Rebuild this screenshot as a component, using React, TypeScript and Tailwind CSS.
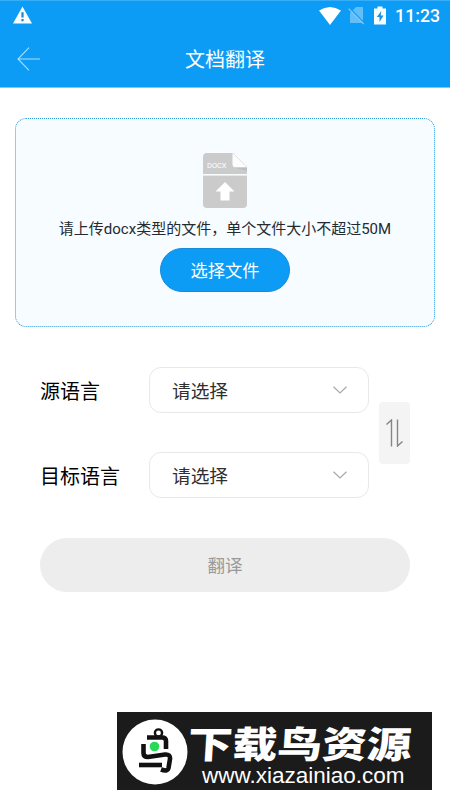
const FONT = "font-[Roboto,'Noto_Sans_CJK_SC',sans-serif]";

function StatusBar() {
  return (
    <div className="flex h-[29px] items-center justify-between pl-[13px] pr-[10px] text-white">
      <svg width="19" height="18" viewBox="0 0 19 18" className="mt-[-1px]">
        <path d="M9.5 0.5 L19 17.5 H0 Z" fill="#f6fdff" />
        <path d="M8.4 6.2h2.2v5.2H8.4zM8.4 13h2.2v2.3H8.4z" fill="#1b86c8" />
      </svg>
      <div className="flex items-center">
        <svg width="22" height="18" viewBox="0 0 22 18">
          <path d="M0 3.6 Q11 -3.6 22 3.6 L11 18 Z" fill="#fff" />
        </svg>
        <svg width="18" height="19" viewBox="0 0 18 19" className="ml-[7px]">
          <path d="M8 1 H15 V17 H2 V7 Z" fill="#62bdf8" />
          <path d="M1.4 1.8 L16 17" stroke="#0c9bf5" strokeWidth="1.4" />
          <path d="M0.6 2.6 L15.6 18" stroke="#7fc9fa" strokeWidth="1.3" />
        </svg>
        <svg width="12" height="19" viewBox="0 0 12 19" className="ml-[8px]">
          <path d="M3.5 0.5h5v2H12V18.5H0V2.5h3.5z" fill="#f6fdff" />
          <path d="M7.3 5 L2.8 11 H5.5 V16 L9.5 9.5 H6.7 Z" fill="#1b8fdc" />
        </svg>
        <span className="ml-[9px] text-[17.7px] font-medium leading-[20px]">11:23</span>
      </div>
    </div>
  );
}

function Header() {
  return (
    <header className="h-[88px] border-b border-t border-b-[#7cc8f8] border-t-[#38aef8] bg-[#0c9bf5]">
      <StatusBar />
      <div className="grid h-[57px] grid-cols-[60px_1fr_60px] items-center text-white">
        <svg width="24" height="24" viewBox="0 0 24 24" className="ml-[17px]" fill="none" stroke="#a5e1ff" strokeWidth="1.1">
          <path d="M12 0.7 L1 12 L12 23.3 M1 12 H23" />
        </svg>
        <h1 className="pt-[3px] text-center text-[20px] leading-[28px]">文档翻译</h1>
      </div>
    </header>
  );
}

function DocxIcon() {
  return (
    <svg width="44" height="55" viewBox="0 0 44 55">
      <path d="M4 0 H30 L44 14 V51 Q44 55 40 55 H4 Q0 55 0 51 V4 Q0 0 4 0 Z" fill="#cbcbcb" />
      <path d="M29.5 0 L44 14.5 H33 Q29.5 14.5 29.5 11 Z" fill="#fdfdfd" />
      <path d="M31 14.5 H44 V18 Z" fill="#bebebe" />
      <rect y="21" width="44" height="1.6" fill="#f7fcff" />
      <path d="M22 29 L31.5 38.5 H26.5 V47.5 H17.5 V38.5 H12.5 Z" fill="#fff" />
      <text x="4" y="15" fontSize="7.8" fontFamily="Roboto, sans-serif" fill="#fff" textLength="19.5" lengthAdjust="spacingAndGlyphs">
        DOCX
      </text>
    </svg>
  );
}

function UploadBox() {
  return (
    <section className="mx-[15px] mt-[30px] flex h-[209px] flex-col items-center rounded-[11px] border border-dotted border-[#2f9bdc] bg-[#f6fcff] pt-[34px]">
      <DocxIcon />
      <p className="mt-[11px] whitespace-nowrap text-[15px] leading-[20px] text-[#252a30]">
        请上传docx类型的文件，单个文件大小不超过50M
      </p>
      <button className="mt-[9px] h-[44px] w-[130px] rounded-full border border-[#168bdc] bg-[#0c9bf5] pt-px text-[17.3px] leading-[24px] text-white">
        选择文件
      </button>
    </section>
  );
}

function LanguageRow({ label }: { label: string }) {
  return (
    <div className="flex h-[46px] items-center">
      <span className="w-[109px] pt-[4px] text-[20px] leading-[30px] text-black">{label}</span>
      <button className="flex h-[46px] w-[220px] items-center justify-between rounded-[12px] border border-[#e8e8e8] bg-white pl-[22px] pr-[21px] text-[18.7px] text-[#303030]">
        <span className="pt-[3px] leading-[28px]">请选择</span>
        <svg width="14" height="8" viewBox="0 0 14 8" fill="none" stroke="#a8a8a8" strokeWidth="1.2">
          <path d="M0.5 0.7 L7 7 L13.5 0.7" />
        </svg>
      </button>
    </div>
  );
}

function Watermark() {
  return (
    <div className="ml-[117px] mt-[120px] flex h-[78px] w-[315px] items-start bg-[#1b1b1b] pl-[5px]">
      <svg width="66" height="66" viewBox="0 0 66 66" className="mt-[7px] shrink-0">
        <circle cx="33" cy="33" r="32.5" fill="#fff" />
        <g fill="none" stroke="#111" strokeWidth="4.6">
          <circle cx="36.5" cy="14" r="3.6" strokeWidth="2.4" />
          <path d="M25 18.5 H40 Q44 18.5 44 22 V30" />
          <path d="M21.5 25 V34 Q21.5 38 26 38 L43 35.5 Q48.5 35 48 40 L46.5 49 Q45.5 53 39 50.5" />
          <path d="M17 46 H40" />
        </g>
        <circle cx="32.5" cy="27.5" r="4.8" fill="#29d957" />
      </svg>
      <div className="flex flex-col whitespace-nowrap pt-[10px] text-white">
        <span className="h-[40px] w-[195px] origin-left scale-x-[1.21] -skew-x-3 font-['Noto_Sans_CJK_SC',sans-serif] text-[37px] font-extrabold leading-[40px]">
          下载鸟资源
        </span>
        <span className="ml-[14px] mt-[3px] font-['Liberation_Sans',sans-serif] text-[22.5px] leading-[22px]">www.xiazainiao.com</span>
      </div>
    </div>
  );
}

export default function App() {
  return (
    <main className={`h-[800px] w-[450px] overflow-hidden bg-white ${FONT}`}>
      <Header />
      <UploadBox />
      <div className="mt-[40px] flex items-center gap-[10px] pl-[40px]">
        <div className="flex flex-col gap-[39px]">
          <LanguageRow label="源语言" />
          <LanguageRow label="目标语言" />
        </div>
        <button className="flex h-[62px] w-[31px] items-center justify-center rounded-[4px] bg-[#f4f4f4]">
          <svg width="17" height="28" viewBox="0 0 17 28" fill="none" stroke="#858585" strokeWidth="1.4">
            <path d="M0.5 5.5 L5.5 1 V27.5 M11.5 0.5 V27 L16.5 22.5" />
          </svg>
        </button>
      </div>
      <button className="ml-[40px] mt-[40px] block h-[54px] w-[370px] rounded-full bg-[#ededed] pt-[2px] text-[17.5px] text-[#999999]">
        翻译
      </button>
      <Watermark />
    </main>
  );
}
